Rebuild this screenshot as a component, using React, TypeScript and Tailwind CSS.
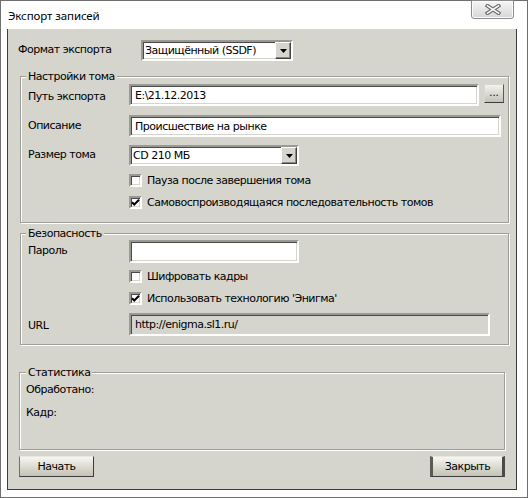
import React from "react";

const sunken =
  "border-2 border-t-[#9a9a94] border-l-[#9a9a94] border-b-white border-r-white shadow-[inset_1px_1px_0_#4a4a48,inset_-1px_-1px_0_#d5d5cd]";

function Arrow() {
  return (
    <div className="w-[16px] h-full bg-[#d5d5cd] border border-t-white border-l-white border-b-[#404040] border-r-[#404040] shadow-[inset_-1px_-1px_0_#8a8a84] flex items-center justify-center">
      <svg width="7" height="4" viewBox="0 0 7 4">
        <path d="M0 0H7L3.5 4Z" fill="#000" />
      </svg>
    </div>
  );
}

function Select({ text, w }: { text: string; w: string }) {
  return (
    <div className={`${w} h-[21px] bg-white ${sunken} flex items-stretch`}>
      <span className="flex-1 pl-[2px] leading-[17px] truncate">{text}</span>
      <Arrow />
    </div>
  );
}

function Input({ text, w, h = "h-[22px]", disabled = false }: { text: string; w: string; h?: string; disabled?: boolean }) {
  return (
    <div className={`${w} ${h} ${disabled ? "bg-[#d5d5cd]" : "bg-white"} ${sunken} flex items-center pl-[4px]`}>
      <span className="leading-[13px]">{text}</span>
    </div>
  );
}

function Check({ label, checked = false, cls = "" }: { label: string; checked?: boolean; cls?: string }) {
  return (
    <div className={`flex items-center pl-[101px] ${cls}`}>
      <div className={`w-[13px] h-[13px] bg-white ${sunken} flex items-center justify-center`}>
        {checked && (
          <svg width="9" height="9" viewBox="0 0 9 9">
            <path d="M1 4.2L3.3 6.5L8 1.8" stroke="#000" strokeWidth="2" fill="none" />
          </svg>
        )}
      </div>
      <span className="ml-[5px] leading-[13px]">{label}</span>
    </div>
  );
}

function Group({ title, cls, children, legendLeft = "left-[5px]" }: { title: string; cls: string; children: React.ReactNode; legendLeft?: string }) {
  return (
    <div className={`relative border border-[#a0a09a] shadow-[inset_1px_1px_0_#fff,1px_1px_0_#fff] ${cls}`}>
      <span className={`absolute -top-[7px] ${legendLeft} px-[2px] bg-[#d5d5cd] leading-[13px]`}>{title}</span>
      {children}
    </div>
  );
}

function Btn({ text, def = false }: { text: string; def?: boolean }) {
  return (
    <div
      className={`w-[75px] h-[21px] flex items-center justify-center bg-gradient-to-b from-[#f7f6f1] to-[#c4c2b4] border border-t-[#e8e8e2] border-b-[#3c3c3c] ${
        def ? "border-l-[3px] border-r-[3px] border-l-[#5a5a56] border-r-[#4a4a46]" : "border-l-[#707070] border-r-[#3c3c3c]"
      }`}
    >
      <span className="leading-[13px]">{text}</span>
    </div>
  );
}

export default function App() {
  return (
    <div
      className="w-[528px] h-[498px] border border-[#6e6e6e] bg-white flex flex-col text-[11px] tracking-[-0.5px] text-black"
      style={{ fontFamily: '"DejaVu Sans", Tahoma, sans-serif' }}
    >
      <div className="h-[28px] flex items-start justify-between">
        <span
          className="ml-[7px] mt-[7px] text-[11.5px] tracking-[-0.1px] leading-[16px]"
          style={{ fontFamily: '"Noto Sans", sans-serif' }}
        >
          Экспорт записей
        </span>
        <div className="mr-[13px] -mt-[1px] w-[43px] h-[19px] border border-[#8c8c8c] rounded-b-[3px] bg-gradient-to-b from-[#f6f6f6] to-[#d6d6d6] shadow-[inset_0_0_0_1px_#fbfbfb] flex items-center justify-center">
          <svg width="16" height="11" viewBox="0 0 16 11">
            <path d="M2.5 1.8L13.5 9.2M13.5 1.8L2.5 9.2" stroke="#6c6c6c" strokeWidth="3.8" strokeLinecap="square" />
            <path d="M2.5 1.8L13.5 9.2M13.5 1.8L2.5 9.2" stroke="#fdfdfd" strokeWidth="1.6" strokeLinecap="square" />
          </svg>
        </div>
      </div>
      <div className="ml-[6px] mr-[10px] h-[461px] bg-[#d5d5cd] border-l border-r border-b border-[#3c3c3c] border-t-0 flex flex-col pt-[11px]">
        <div className="flex items-center ml-[10px]">
          <span className="w-[123px]">Формат экспорта</span>
          <Select text="Защищённый (SSDF)" w="w-[152px]" />
        </div>

        <Group title="Настройки тома" cls="mt-[15px] ml-[12px] mr-[7px] pt-[7px] pb-[13px] pl-[7px]">
          <div className="flex items-start">
            <span className="w-[101px] mt-[5px]">Путь экспорта</span>
            <Input text="E:\21.12.2013" w="w-[350px]" />
            <div className="ml-[5px] w-[20px] h-[19px] bg-gradient-to-b from-[#f3f2ed] to-[#c4c2b6] border border-t-[#d8d8d0] border-l-[#d8d8d0] border-b-[#3c3c3c] border-r-[#5a5a56] flex items-end justify-center">
              <span className="text-[10px] leading-[10px] mb-[4px] tracking-[0px]">...</span>
            </div>
          </div>
          <div className="flex items-center mt-[9px]">
            <span className="w-[101px]">Описание</span>
            <Input text="Происшествие на рынке" w="w-[372px]" />
          </div>
          <div className="flex items-center mt-[8px]">
            <span className="w-[101px]">Размер тома</span>
            <Select text="CD 210 МБ" w="w-[170px]" />
          </div>
          <Check label="Пауза после завершения тома" cls="mt-[8px]" />
          <Check label="Самовоспроизводящаяся последовательность томов" checked cls="mt-[9px]" />
        </Group>

        <Group title="Безопасность" cls="mt-[10px] ml-[12px] mr-[7px] pt-[6px] pb-[8px] pl-[7px]">
          <div className="flex items-center">
            <span className="w-[101px]">Пароль</span>
            <Input text="" w="w-[170px]" h="h-[23px]" />
          </div>
          <Check label="Шифровать кадры" cls="mt-[7px]" />
          <Check label="Использовать технологию 'Энигма'" checked cls="mt-[9px]" />
          <div className="flex items-center mt-[8px]">
            <span className="w-[101px] mt-[4px]">URL</span>
            <Input text="http://enigma.sl1.ru/" w="w-[361px]" h="h-[23px]" disabled />
          </div>
        </Group>

        <Group title="Статистика" legendLeft="left-[6px]" cls="mt-[27px] ml-[11px] mr-[11px] h-[78px] pt-[10px] pl-[6px]">
          <div className="leading-[13px]">Обработано:</div>
          <div className="leading-[13px] mt-[10px]">Кадр:</div>
        </Group>

        <div className="mt-[6px] ml-[11px] mr-[11px] flex justify-between">
          <Btn text="Начать" />
          <Btn text="Закрыть" def />
        </div>
      </div>
    </div>
  );
}
